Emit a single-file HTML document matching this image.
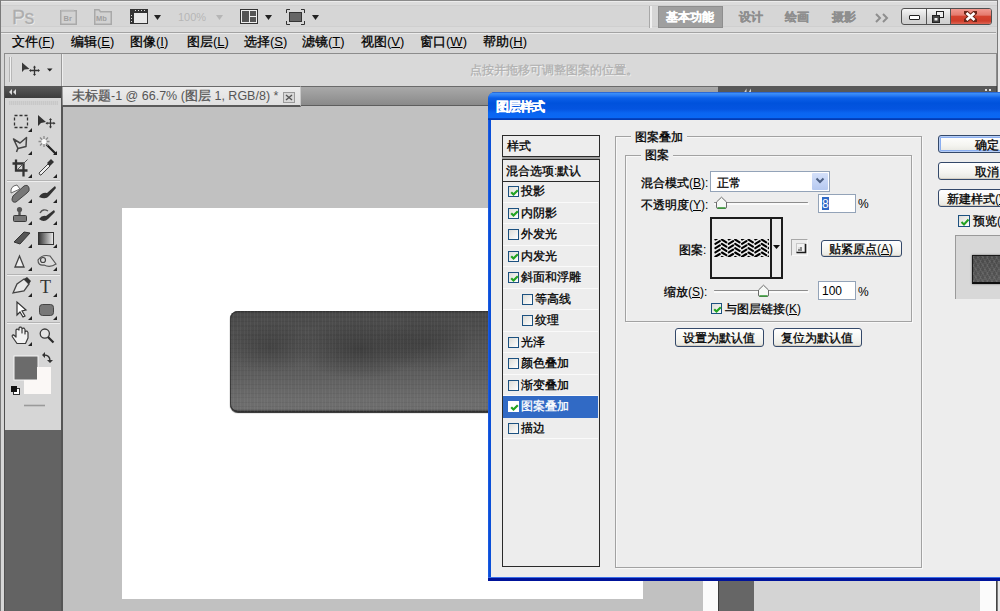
<!DOCTYPE html>
<html><head><meta charset="utf-8">
<style>
*{margin:0;padding:0;box-sizing:border-box}
html,body{width:1000px;height:611px;overflow:hidden}
body{position:relative;background:#d6d6d6;font-family:"Liberation Sans",sans-serif;font-size:12px;color:#000}
.a{position:absolute}
.t{position:absolute;white-space:nowrap;line-height:12px;font-size:12px}
u{text-decoration:underline}
.mn{font-size:13px}.mn .c{width:13px}
.tofu .c{transform:scale(1.4,1.05);-webkit-text-stroke:1px}
.c{display:inline-block;width:12px;text-align:center;-webkit-text-stroke:0.3px}
.cb{position:absolute;width:11px;height:11px;border:1px solid #1c5180;background:linear-gradient(135deg,#dcdcd7,#fff)}
.cbs{position:absolute;width:11px;height:11px;border:1px solid #fff;background:#fff}
.etch{border:1px solid #a2a2a2;box-shadow:inset 1px 1px 0 #f8f8f8,1px 1px 0 #f8f8f8}
.btn{border:1px solid #34496a;border-radius:3px;background:linear-gradient(#fff 0%,#f4f4f0 60%,#e6e6e0 100%);box-shadow:inset 0 -1px 0 #d6d0c5}
.def{box-shadow:inset 0 0 0 1px #b6cdf5,inset 0 0 0 2px #8aaef0}
</style></head><body>
<!-- app frame -->
<div class="a" style="left:0;top:0;width:1000px;height:1px;background:#8a8a8a"></div>
<div class="a" style="left:1px;top:1px;width:996px;height:1px;background:#ececec"></div>
<div class="a" style="left:0;top:0;width:1px;height:611px;background:#7a7a7a"></div>
<div class="a" style="left:997px;top:0;width:1px;height:611px;background:#7a7a7a"></div>
<div class="a" style="left:998px;top:0;width:2px;height:611px;background:#e8e8e8"></div>

<!-- title bar -->
<div class="a" style="left:1px;top:2px;width:996px;height:3px;background:#dcdcdc"></div>
<div class="a" style="left:1px;top:5px;width:996px;height:1px;background:#cfcfcf"></div>
<div class="a" style="left:1px;top:26px;width:996px;height:1px;background:#cfcfcf"></div>
<div class="a" style="left:1px;top:27px;width:996px;height:5px;background:#dadada"></div>
<div id="titlebar">
<div class="t" style="left:12px;top:7px;font-size:19.5px;line-height:20px;color:#acacac;-webkit-text-stroke:0.3px #b4b4b4;text-shadow:1px 1px 0 #ececec;letter-spacing:-0.5px">Ps</div>
<svg class="a" style="left:60px;top:9px" width="18" height="16"><rect x="0.75" y="1.75" width="15.5" height="13.5" fill="#d2d2d2" stroke="#a9a9a9" stroke-width="1.5"/><path d="M1 1.5H14" stroke="#b8b8b8" stroke-width="1.5"/><text x="3.5" y="12" font-family="Liberation Sans" font-size="7.5" font-weight="bold" fill="#a0a0a0">Br</text></svg>
<svg class="a" style="left:94px;top:9px" width="19" height="16"><path d="M0.75 15.25V0.75H5L6.5 2.75H17.25V15.25Z" fill="#d2d2d2" stroke="#a9a9a9" stroke-width="1.5"/><text x="2" y="12" font-family="Liberation Sans" font-size="7.5" font-weight="bold" fill="#a0a0a0">Mb</text></svg>
<svg class="a" style="left:130px;top:9px" width="19" height="16"><rect x="0.5" y="0.5" width="17" height="14" fill="#e8e8e8" stroke="#333"/><rect x="0" y="0" width="18" height="4" fill="#333"/><rect x="0" y="0" width="4" height="15" fill="#333"/><g fill="#ddd"><rect x="5" y="1" width="1" height="1"/><rect x="8" y="1" width="1" height="1"/><rect x="11" y="1" width="1" height="1"/><rect x="14" y="1" width="1" height="1"/><rect x="1" y="6" width="1" height="1"/><rect x="1" y="9" width="1" height="1"/><rect x="1" y="12" width="1" height="1"/></g></svg>
<svg class="a" style="left:154px;top:15px" width="7" height="5"><path d="M0 0H7L3.5 5Z" fill="#222"/></svg>
<div class="t" style="left:178px;top:12px;font-size:11px;line-height:11px;color:#b6b6b6">100%</div>
<svg class="a" style="left:216px;top:15px" width="7" height="5"><path d="M0 0H7L3.5 5Z" fill="#b6b6b6"/></svg>
<svg class="a" style="left:240px;top:9px" width="19" height="16"><rect x="0.5" y="0.5" width="17" height="14" fill="#eee" stroke="#333"/><rect x="2" y="2" width="7" height="11" fill="#555"/><rect x="10" y="2" width="6" height="5" fill="#555"/><rect x="10" y="8" width="6" height="5" fill="#555"/></svg>
<svg class="a" style="left:265px;top:15px" width="7" height="5"><path d="M0 0H7L3.5 5Z" fill="#222"/></svg>
<svg class="a" style="left:286px;top:9px" width="19" height="16"><path d="M0.5 4V0.5H4M15 0.5H18.5V4M18.5 12V15.5H15M4 15.5H0.5V12" fill="none" stroke="#333"/><rect x="3.5" y="3.5" width="12" height="9" fill="#666" stroke="#333"/></svg>
<svg class="a" style="left:312px;top:15px" width="7" height="5"><path d="M0 0H7L3.5 5Z" fill="#222"/></svg>
<div class="a" style="left:649px;top:6px;width:1px;height:22px;background:#a8a8a8"></div>
<div class="a" style="left:650px;top:6px;width:2px;height:22px;background:#f0f0f0"></div>
<div class="a" style="left:658px;top:6px;width:65px;height:22px;background:#9f9f9f;border:1px solid #8e8e8e"></div>
<div class="t" style="left:666px;top:11px;color:#fff;font-weight:bold"><span class=c>基</span><span class=c>本</span><span class=c>功</span><span class=c>能</span></div>
<div class="t" style="left:739px;top:11px;color:#8e8e8e;font-weight:bold"><span class=c>设</span><span class=c>计</span></div>
<div class="t" style="left:785px;top:11px;color:#8e8e8e;font-weight:bold"><span class=c>绘</span><span class=c>画</span></div>
<div class="t" style="left:832px;top:11px;color:#8e8e8e;font-weight:bold"><span class=c>摄</span><span class=c>影</span></div>
<svg class="a" style="left:875px;top:13px" width="15" height="10"><path d="M1 1L5 5L1 9M8 1L12 5L8 9" fill="none" stroke="#8e8e8e" stroke-width="2"/></svg>
<div class="a" style="left:901px;top:8px;width:91px;height:17px;border:1px solid #505050;border-radius:3px;background:linear-gradient(#f6f6f6,#d6d6d6 60%,#cfcfcf);overflow:hidden">
 <div class="a" style="left:24px;top:0;width:1px;height:15px;background:#555"></div>
 <div class="a" style="left:48px;top:0;width:41px;height:15px;background:linear-gradient(#f29a90 0%,#e57b6e 40%,#d4432f 50%,#cf3d2a 80%,#dd6655 100%);border-left:1px solid #555"></div>
 <div class="a" style="left:6.5px;top:6px;width:11px;height:5px;border:1px solid #222;background:#fff;border-radius:1px"></div>
 <svg class="a" style="left:29px;top:2px" width="15" height="12"><rect x="5.5" y="0.5" width="7" height="6" fill="#eee" stroke="#222"/><rect x="1.5" y="4.5" width="7" height="7" fill="#444" stroke="#222"/><rect x="3.5" y="7" width="3" height="2.5" fill="#eee"/></svg>
 <svg class="a" style="left:62px;top:2px" width="13" height="11"><path d="M2 1.5L11 9.5M11 1.5L2 9.5" stroke="#6a2518" stroke-width="4.6" stroke-linecap="round"/><path d="M2.5 2L10.5 9M10.5 2L2.5 9" stroke="#fff" stroke-width="2.6"/></svg>
</div>
</div>
<div class="a" style="left:1px;top:32px;width:995px;height:1px;background:#a3a3a3"></div>
<div class="a" style="left:1px;top:33px;width:995px;height:1px;background:#ececec"></div>

<!-- menu -->
<div id="menu">
<div class="t mn" style="left:12px;top:36px"><span class=c>文</span><span class=c>件</span>(<u>F</u>)</div>
<div class="t mn" style="left:71px;top:36px"><span class=c>编</span><span class=c>辑</span>(<u>E</u>)</div>
<div class="t mn" style="left:130px;top:36px"><span class=c>图</span><span class=c>像</span>(<u>I</u>)</div>
<div class="t mn" style="left:187px;top:36px"><span class=c>图</span><span class=c>层</span>(<u>L</u>)</div>
<div class="t mn" style="left:244px;top:36px"><span class=c>选</span><span class=c>择</span>(<u>S</u>)</div>
<div class="t mn" style="left:302px;top:36px"><span class=c>滤</span><span class=c>镜</span>(<u>T</u>)</div>
<div class="t mn" style="left:361px;top:36px"><span class=c>视</span><span class=c>图</span>(<u>V</u>)</div>
<div class="t mn" style="left:420px;top:36px"><span class=c>窗</span><span class=c>口</span>(<u>W</u>)</div>
<div class="t mn" style="left:483px;top:36px"><span class=c>帮</span><span class=c>助</span>(<u>H</u>)</div>
</div>

<!-- options bar -->
<div class="a" style="left:4px;top:53px;width:993px;height:33px;background:#d9d9d9;border:1px solid #8c8c8c;border-bottom:none"></div>

<!-- toolbox -->
<div class="a" style="left:4px;top:86px;width:59px;height:525px;background:#636363;border-left:1px solid #505050;border-right:2px solid #555"></div>
<div class="a" style="left:5px;top:86px;width:56px;height:12px;background:linear-gradient(#5a5a5a,#3c3c3c)"></div>
<div class="a" style="left:5px;top:98px;width:56px;height:332px;background:#d6d6d6"></div>
<svg class="a" style="left:0;top:0" width="62" height="430">
<g fill="#222">
<path d="M32 128V132H28ZM32 151V155H28ZM32 174V178H28ZM32 199V203H28ZM32 221V225H28ZM32 244V248H28ZM32 267V271H28ZM32 293V297H28ZM32 316V320H28ZM32 342V346H28Z"/>
<path d="M57 151V155H53ZM57 174V178H53ZM57 199V203H53ZM57 221V225H53ZM57 244V248H53ZM57 267V271H53ZM57 293V297H53ZM57 316V320H53Z"/>
</g>
<rect x="14.5" y="115.5" width="13" height="12" fill="none" stroke="#333" stroke-width="1.3" stroke-dasharray="3 2"/>
<path d="M38 115L38 126L41 123L46 122Z" fill="#333"/><path d="M50.5 119.5V127M47 123.2H54" stroke="#333" stroke-width="1.2"/><path d="M50.5 118L49 120H52ZM50.5 128.5L49 126.5H52ZM45.5 123.2L47.5 121.7V124.7ZM55.5 123.2L53.5 121.7V124.7Z" fill="#333"/>
<path d="M13.5 139L20 143L26.5 137.5L26 146.5L18 148.5Z" fill="none" stroke="#444" stroke-width="1.5" stroke-linejoin="round"/><path d="M18 148L16.5 152" stroke="#444" stroke-width="1.5"/>
<path d="M46.5 144.5L56 154" stroke="#222" stroke-width="2.2"/><path d="M44 136V147M38.5 141.5H49.5M40 137.5L48 145.5M48 137.5L40 145.5" stroke="#8a8a8a" stroke-width="1.3"/><circle cx="44" cy="141.5" r="2.6" fill="#fafafa"/>
<path d="M16 159.5V170.5H27.5M12.5 163.5H23.5V176.5" fill="none" stroke="#333" stroke-width="2.3"/><path d="M18 169L27.5 159.5" stroke="#555" stroke-width="1"/>
<path d="M40 175L39 173L48 164L50 166L41 175Z" fill="#eee" stroke="#444"/><path d="M47 163L51 159L54 162L50 166Z" fill="#333"/>
<path d="M13 196L24 186Q28 184 29 188Q30 191 27 193L16 202Q12 203 12 199Z" fill="#777" stroke="#444"/><path d="M11 193Q10 186 17 185L20 189Z" fill="#fff" stroke="#666"/>
<path d="M39 197Q42 192 47 193L55 186L56 188L49 196Q46 200 39 197Z" fill="#333"/>
<circle cx="19.5" cy="209.5" r="2.6" fill="#555"/><rect x="18.3" y="211" width="2.4" height="5" fill="#555"/><rect x="13.5" y="215.5" width="13" height="6" rx="1" fill="#777" stroke="#3a3a3a"/>
<path d="M39 219Q42 215 46 216L54 210L55 212L48 219Q44 223 39 219Z" fill="#333"/><path d="M40 213Q43 208 48 211" fill="none" stroke="#555" stroke-width="1.4"/>
<path d="M14 242L24 232L30 233L20 244Z" fill="#555" stroke="#333"/>
<rect x="38.5" y="232.5" width="15" height="12" fill="url(#gr)" stroke="#333"/>
<path d="M15 267L19.5 256L24 267Z" fill="#eee" stroke="#444" stroke-width="1.3"/>
<path d="M38 260Q42 254 50 256L56 264Q50 268 44 265Q38 266 38 260Z" fill="#ddd" stroke="#555" stroke-width="1.2"/><circle cx="43" cy="260" r="2.5" fill="none" stroke="#444" stroke-width="1.2"/>
<path d="M13 293L17 284L24 279L29 284L24 291Z" fill="#e8e8e8" stroke="#444" stroke-width="1.3"/><path d="M24 279L27 277L31 281L29 284Z" fill="#333"/>
<text x="40" y="293" font-family="Liberation Serif" font-size="18" fill="#333">T</text>
<path d="M17 302V315L20 312L23 317L25 316L22 311L26 310Z" fill="#fff" stroke="#333" stroke-width="1.2"/>
<rect x="39.5" y="304.5" width="14" height="11" rx="3" fill="#777" stroke="#444"/>
<path d="M17 343.5L12.5 337Q11.5 335 13.5 334.8L16 337V330Q16.5 328.8 17.8 329.2L19 330V328Q19.5 326.8 21 327.2L22 328.5V333V329Q22.5 327.8 24 328.2L25 329.5V334V332Q25.5 330.8 27 331.2L28 332.5V338L25.5 343.5Z" fill="#f2f2f2" stroke="#3a3a3a" stroke-width="1.2" stroke-linejoin="round"/>
<circle cx="44.8" cy="333.6" r="4.6" fill="#e4e4e4" stroke="#3a3a3a" stroke-width="1.3"/><path d="M48 337L53.5 342.5" stroke="#2a2a2a" stroke-width="2.2"/>
<path d="M7 180.5H60M7 274.5H60M7 322.5H60" stroke="#b4b4b4"/><path d="M7 181.5H60M7 275.5H60M7 323.5H60" stroke="#efefef"/>
<rect x="14" y="356" width="24" height="24" fill="#6b6b6b" stroke="#f6f6f6"/>
<rect x="37" y="367" width="14" height="27" fill="#fbf8f6"/><rect x="24" y="380" width="14" height="14" fill="#fbf8f6"/>
<rect x="13.5" y="388.5" width="6" height="6" fill="#fff" stroke="#333"/><rect x="11" y="386" width="6" height="6" fill="#111"/>
<path d="M44 355Q50 355 50 361" fill="none" stroke="#333" stroke-width="1.4"/><path d="M42 355L45 352V358ZM50 363L47 360H53Z" fill="#333"/>
<path d="M24 405.5H45" stroke="#9a9a9a" stroke-width="1.6"/>
<defs><linearGradient id="gr"><stop offset="0" stop-color="#333"/><stop offset="1" stop-color="#eee"/></linearGradient></defs>
</svg>


<!-- document area -->
<div class="a" style="left:62px;top:86px;width:656px;height:20px;background:linear-gradient(#a9a9a9,#8a8a8a);border-top:1px solid #6a6a6a;border-bottom:1px solid #5e5e5e"></div>
<div class="a" style="left:63px;top:106px;width:640px;height:505px;background:#c1c1c1"></div>
<div class="a" style="left:122px;top:208px;width:521px;height:391px;background:#fff"></div>

<!-- options content -->
<div class="a" style="left:9px;top:57px;width:1px;height:25px;background:#b4b4b4"></div><div class="a" style="left:10px;top:57px;width:1px;height:25px;background:#f2f2f2"></div><div class="a" style="left:11px;top:57px;width:1px;height:25px;background:#b8b8b8"></div>
<svg class="a" style="left:20px;top:60px" width="36" height="18"><path d="M2 2.5L2 12L4.5 9.5L9.5 9Z" fill="#3a3a3a"/><path d="M14.5 7V14.5M10.5 10.5H18.5" stroke="#333" stroke-width="1.3"/><path d="M14.5 5.5L13 7.5H16ZM14.5 16L13 14H16ZM9 10.5L11 9V12ZM20 10.5L18 9V12Z" fill="#333"/><path d="M27 8.5H32.5L29.75 11.5Z" fill="#222"/></svg>
<div class="a" style="left:61px;top:54px;width:1px;height:32px;background:#9a9a9a"></div>
<div class="a" style="left:62px;top:54px;width:1px;height:32px;background:#efefef"></div>
<div class="t" style="left:470px;top:64px;color:#b2b2b2;text-shadow:1px 1px 0 #f4f4f4;"><span class=c>点</span><span class=c>按</span><span class=c>并</span><span class=c>拖</span><span class=c>移</span><span class=c>可</span><span class=c>调</span><span class=c>整</span><span class=c>图</span><span class=c>案</span><span class=c>的</span><span class=c>位</span><span class=c>置</span><span class=c>。</span></div>
<!-- tab -->
<div class="a" style="left:63px;top:86px;width:238px;height:21px;background:linear-gradient(#ececec,#e0e0e0);border-top:1px solid #6a6a6a;border-right:1px solid #c8c8c8;border-bottom:2px solid #5a5a5a"></div>
<div class="t mn" style="left:72px;top:90px;color:#555;font-size:12.5px"><span class=c>未</span><span class=c>标</span><span class=c>题</span></div>
<div class="t mn" style="left:111px;top:90px;color:#555;font-size:12.5px">-1 @ 66.7% (</div>
<div class="t mn" style="left:185px;top:90px;color:#555;font-size:12.5px"><span class=c>图</span><span class=c>层</span></div>
<div class="t mn" style="left:211px;top:90px;color:#555;font-size:12.5px">&nbsp;1, RGB/8) *</div>
<div class="a" style="left:283px;top:92px;width:12px;height:11px;border:1px solid #9a9a9a;background:#d8d8d8"></div>
<svg class="a" style="left:285px;top:94px" width="8" height="7"><path d="M1 1L7 6M7 1L1 6" stroke="#555" stroke-width="1.4"/></svg>
<!-- dock header icons -->
<svg class="a" style="left:8px;top:88px" width="10" height="8"><path d="M4 1L1 4L4 7ZM8 1L5 4L8 7Z" fill="#ddd"/></svg>
<div class="a" style="left:9px;top:101px;width:49px;height:4px;background:repeating-linear-gradient(90deg,#c8c8c8 0 1px,#d0d0d0 1px 2px)"></div>
<!-- canvas button -->
<div class="a" style="left:230px;top:311px;width:300px;height:101px;border-radius:8px;background:linear-gradient(#3c3c3c 0px,#4a4a4a 3px,#525252 30%,#5e5e5e 62%,#6c6c6c 88%,#6e6e6e 97%,#3a3a3a 100%);box-shadow:0 1px 1px rgba(0,0,0,.85), inset 0 0 0 1px #333, inset 0 -1px 0 #222;overflow:hidden">
<div class="a" style="left:0;top:0;width:300px;height:101px;background:radial-gradient(ellipse 45px 26px at 40px 36px,rgba(30,30,30,.32),transparent),radial-gradient(ellipse 65px 30px at 130px 38px,rgba(30,30,30,.42),transparent),radial-gradient(ellipse 50px 28px at 195px 33px,rgba(30,30,30,.35),transparent)"></div>
<div class="a" style="left:0;top:0;width:300px;height:101px;background:repeating-linear-gradient(90deg,rgba(255,255,255,.04) 0 1px,transparent 1px 3.4px),repeating-linear-gradient(0deg,rgba(0,0,0,.05) 0 1px,transparent 1px 4.5px)"></div>
</div>
<!-- right dock -->
<div class="a" style="left:718px;top:86px;width:279px;height:525px;background:#d4d4d4"></div>
<div class="a" style="left:718px;top:86px;width:279px;height:7px;background:#585858"></div>
<div class="a" style="left:703px;top:92px;width:15px;height:519px;background:#fbfbfb"></div>
<div class="a" style="left:718px;top:92px;width:36px;height:519px;background:#666;border-left:1px solid #3a3a3a"></div>
<div class="a" style="left:980px;top:92px;width:16px;height:519px;background:#fbfbfb"></div>
<div class="a" style="left:996px;top:86px;width:1px;height:525px;background:#444"></div>

<svg class="a" style="left:744px;top:88px" width="8" height="5"><path d="M0 4.5L2.5 0.5V4.5ZM4.5 4.5L7 0.5V4.5Z" fill="#d0d0d0"/></svg>
<div class="a" style="left:985px;top:89px;width:2px;height:2px;background:#ddd"></div><div class="a" style="left:989px;top:89px;width:2px;height:2px;background:#ddd"></div>
<!-- dialog -->
<div id="dialog">
<div class="a" style="left:488px;top:92px;width:530px;height:489px;background:#0a4fd8;border-radius:7px 7px 0 0"></div>
<div class="a" style="left:488px;top:92px;width:530px;height:28px;border-radius:7px 7px 0 0;background:linear-gradient(#2358c8 0,#3b8ef8 1.5px,#2a7cf4 3.5px,#0b5fe8 6px,#0052dc 11px,#0454e0 17px,#0a66f2 21px,#0a68f4 25.5px,#0444c2 26.5px,#0038b0 28px)"></div>

<div class="t" style="left:496px;top:100px;font-size:13px;line-height:13px;font-weight:bold;color:#fff"><span class=c>图</span><span class=c>层</span><span class=c>样</span><span class=c>式</span></div>
<div class="a" style="left:491px;top:120px;width:520px;height:458px;background:#ededed"></div>
<div class="a" style="left:488px;top:120px;width:1px;height:461px;background:#1a5ae0"></div>
<div class="a" style="left:488px;top:578px;width:520px;height:3px;background:#00139a"></div>
<div class="a" style="left:488px;top:577px;width:520px;height:1px;background:#3a6ee8"></div>
<!-- style list -->
<div class="a" style="left:502px;top:135px;width:98px;height:432px;border:1.3px solid #2a2a2a;background:#ededed"></div>
<div class="t" style="left:507px;top:140px"><span class=c>样</span><span class=c>式</span></div>
<div class="a" style="left:502px;top:156px;width:98px;height:4px;background:#9a9a9a;border-top:1px solid #2a2a2a;border-bottom:1px solid #2a2a2a"></div>
<div class="t" style="left:506px;top:165px"><span class=c>混</span><span class=c>合</span><span class=c>选</span><span class=c>项</span>:<span class=c>默</span><span class=c>认</span></div>
<div class="a" style="left:502px;top:180.5px;width:98px;height:1.2px;background:#2a2a2a"></div>
<div class="a" style="left:503px;top:181.0px;width:95px;height:21.5px;background:transparent;border-bottom:1px solid #fafafa"></div>
<div class="a cb" style="left:508px;top:186.0px"><svg width="9" height="9" class="a" style="left:0.5px;top:0.5px"><path d="M1.2 4.2L3.5 6.5L7.8 2.2" fill="none" stroke="#22a322" stroke-width="2.2"/></svg></div>
<div class="t" style="left:521px;top:185.0px;color:#000"><span class=c>投</span><span class=c>影</span></div>
<div class="a" style="left:503px;top:202.5px;width:95px;height:21.5px;background:transparent;border-bottom:1px solid #fafafa"></div>
<div class="a cb" style="left:508px;top:207.5px"><svg width="9" height="9" class="a" style="left:0.5px;top:0.5px"><path d="M1.2 4.2L3.5 6.5L7.8 2.2" fill="none" stroke="#22a322" stroke-width="2.2"/></svg></div>
<div class="t" style="left:521px;top:206.5px;color:#000"><span class=c>内</span><span class=c>阴</span><span class=c>影</span></div>
<div class="a" style="left:503px;top:224.0px;width:95px;height:21.5px;background:transparent;border-bottom:1px solid #fafafa"></div>
<div class="a cb" style="left:508px;top:229.0px"></div>
<div class="t" style="left:521px;top:228.0px;color:#000"><span class=c>外</span><span class=c>发</span><span class=c>光</span></div>
<div class="a" style="left:503px;top:245.5px;width:95px;height:21.5px;background:transparent;border-bottom:1px solid #fafafa"></div>
<div class="a cb" style="left:508px;top:250.5px"><svg width="9" height="9" class="a" style="left:0.5px;top:0.5px"><path d="M1.2 4.2L3.5 6.5L7.8 2.2" fill="none" stroke="#22a322" stroke-width="2.2"/></svg></div>
<div class="t" style="left:521px;top:249.5px;color:#000"><span class=c>内</span><span class=c>发</span><span class=c>光</span></div>
<div class="a" style="left:503px;top:267.0px;width:95px;height:21.5px;background:transparent;border-bottom:1px solid #fafafa"></div>
<div class="a cb" style="left:508px;top:272.0px"><svg width="9" height="9" class="a" style="left:0.5px;top:0.5px"><path d="M1.2 4.2L3.5 6.5L7.8 2.2" fill="none" stroke="#22a322" stroke-width="2.2"/></svg></div>
<div class="t" style="left:521px;top:271.0px;color:#000"><span class=c>斜</span><span class=c>面</span><span class=c>和</span><span class=c>浮</span><span class=c>雕</span></div>
<div class="a" style="left:503px;top:288.5px;width:95px;height:21.5px;background:transparent;border-bottom:1px solid #fafafa"></div>
<div class="a cb" style="left:522px;top:293.5px"></div>
<div class="t" style="left:535px;top:292.5px;color:#000"><span class=c>等</span><span class=c>高</span><span class=c>线</span></div>
<div class="a" style="left:503px;top:310.0px;width:95px;height:21.5px;background:transparent;border-bottom:1px solid #fafafa"></div>
<div class="a cb" style="left:522px;top:315.0px"></div>
<div class="t" style="left:535px;top:314.0px;color:#000"><span class=c>纹</span><span class=c>理</span></div>
<div class="a" style="left:503px;top:331.5px;width:95px;height:21.5px;background:transparent;border-bottom:1px solid #fafafa"></div>
<div class="a cb" style="left:508px;top:336.5px"></div>
<div class="t" style="left:521px;top:335.5px;color:#000"><span class=c>光</span><span class=c>泽</span></div>
<div class="a" style="left:503px;top:353.0px;width:95px;height:21.5px;background:transparent;border-bottom:1px solid #fafafa"></div>
<div class="a cb" style="left:508px;top:358.0px"></div>
<div class="t" style="left:521px;top:357.0px;color:#000"><span class=c>颜</span><span class=c>色</span><span class=c>叠</span><span class=c>加</span></div>
<div class="a" style="left:503px;top:374.5px;width:95px;height:21.5px;background:transparent;border-bottom:1px solid #fafafa"></div>
<div class="a cb" style="left:508px;top:379.5px"></div>
<div class="t" style="left:521px;top:378.5px;color:#000"><span class=c>渐</span><span class=c>变</span><span class=c>叠</span><span class=c>加</span></div>
<div class="a" style="left:503px;top:396.0px;width:95px;height:21.5px;background:#316ac5;border-bottom:1px solid #316ac5"></div>
<div class="a cbs" style="left:508px;top:401.0px"><svg width="9" height="9" class="a" style="left:0.5px;top:0.5px"><path d="M1.2 4.2L3.5 6.5L7.8 2.2" fill="none" stroke="#22a322" stroke-width="2.2"/></svg></div>
<div class="t" style="left:521px;top:400.0px;color:#fff"><span class=c>图</span><span class=c>案</span><span class=c>叠</span><span class=c>加</span></div>
<div class="a" style="left:503px;top:417.5px;width:95px;height:21.5px;background:transparent;border-bottom:1px solid #fafafa"></div>
<div class="a cb" style="left:508px;top:422.5px"></div>
<div class="t" style="left:521px;top:421.5px;color:#000"><span class=c>描</span><span class=c>边</span></div>

<!-- pattern overlay panel -->
<div class="a etch" style="left:615px;top:136px;width:307px;height:432px"></div>
<div class="t" style="left:631px;top:131px;background:#ededed;padding:0 4px"><span class=c>图</span><span class=c>案</span><span class=c>叠</span><span class=c>加</span></div>
<div class="a etch" style="left:625px;top:155px;width:287px;height:167px"></div>
<div class="t" style="left:641px;top:149px;background:#ededed;padding:0 4px"><span class=c>图</span><span class=c>案</span></div>
<div class="t" style="left:641px;top:177px"><span class=c>混</span><span class=c>合</span><span class=c>模</span><span class=c>式</span>(<u>B</u>):</div>
<div class="a" style="left:710px;top:171px;width:120px;height:21px;border:1px solid #93a3b8;background:#fff"></div>
<div class="t" style="left:717px;top:177px"><span class=c>正</span><span class=c>常</span></div>
<div class="a" style="left:812px;top:173px;width:16px;height:17px;background:linear-gradient(#d4e0fa,#b6c9f0);border-radius:1px"></div>
<svg class="a" style="left:815px;top:177px" width="10" height="8"><path d="M1.5 1.5L5 5L8.5 1.5" fill="none" stroke="#4d6185" stroke-width="2"/></svg>
<div class="t" style="left:641px;top:199px"><span class=c>不</span><span class=c>透</span><span class=c>明</span><span class=c>度</span>(<u>Y</u>):</div>
<div class="a" style="left:714px;top:202px;width:94px;height:1px;background:#8c8c8c;border-radius:1px"></div><div class="a" style="left:714px;top:203px;width:95px;height:1.5px;background:#fafafa"></div>
<svg class="a" style="left:715px;top:196px" width="13" height="14"><path d="M1.5 6L6.5 1.2L11.5 6V11Q11.5 12.5 10 12.5H3Q1.5 12.5 1.5 11Z" fill="#f6f8f6" stroke="#6a6a6a"/><path d="M2.5 12H10.5" stroke="#3a9a3a" stroke-width="1.6"/></svg>
<div class="a" style="left:818px;top:194px;width:38px;height:19px;border:1px solid #93a3b8;background:#fff"></div>
<div class="a" style="left:822px;top:197px;width:7px;height:13px;background:#316ac5"></div>
<div class="t" style="left:822px;top:198px;color:#fff">8</div>
<div class="t" style="left:858px;top:198px">%</div>
<div class="t" style="left:679px;top:244px"><span class=c>图</span><span class=c>案</span>:</div>
<div class="a" style="left:710px;top:217px;width:73px;height:62px;border:2px solid #1c1c1c;background:#ececec"></div>
<div class="a" style="left:770px;top:217px;width:2px;height:62px;background:#1c1c1c"></div>
<svg class="a" style="left:713.5px;top:238.5px" width="55" height="18.5"><path d="M1.4 0.5L5.8 -2.2M7.9 -3.7L12.3 -1.0M1.4 4.8L5.8 2.1M7.9 0.6L12.3 3.3M1.4 9.1L5.8 6.4M7.9 4.9L12.3 7.6M1.4 13.4L5.8 10.7M7.9 9.2L12.3 11.9M1.4 17.7L5.8 15.0M7.9 13.5L12.3 16.2M1.4 22.0L5.8 19.3M7.9 17.8L12.3 20.5M1.4 26.3L5.8 23.6M7.9 22.1L12.3 24.8M14.7 0.5L19.1 -2.2M21.2 -3.7L25.6 -1.0M14.7 4.8L19.1 2.1M21.2 0.6L25.6 3.3M14.7 9.1L19.1 6.4M21.2 4.9L25.6 7.6M14.7 13.4L19.1 10.7M21.2 9.2L25.6 11.9M14.7 17.7L19.1 15.0M21.2 13.5L25.6 16.2M14.7 22.0L19.1 19.3M21.2 17.8L25.6 20.5M14.7 26.3L19.1 23.6M21.2 22.1L25.6 24.8M28.0 0.5L32.4 -2.2M34.5 -3.7L38.9 -1.0M28.0 4.8L32.4 2.1M34.5 0.6L38.9 3.3M28.0 9.1L32.4 6.4M34.5 4.9L38.9 7.6M28.0 13.4L32.4 10.7M34.5 9.2L38.9 11.9M28.0 17.7L32.4 15.0M34.5 13.5L38.9 16.2M28.0 22.0L32.4 19.3M34.5 17.8L38.9 20.5M28.0 26.3L32.4 23.6M34.5 22.1L38.9 24.8M41.3 0.5L45.7 -2.2M47.8 -3.7L52.2 -1.0M41.3 4.8L45.7 2.1M47.8 0.6L52.2 3.3M41.3 9.1L45.7 6.4M47.8 4.9L52.2 7.6M41.3 13.4L45.7 10.7M47.8 9.2L52.2 11.9M41.3 17.7L45.7 15.0M47.8 13.5L52.2 16.2M41.3 22.0L45.7 19.3M47.8 17.8L52.2 20.5M41.3 26.3L45.7 23.6M47.8 22.1L52.2 24.8M54.6 0.5L59.0 -2.2M61.1 -3.7L65.5 -1.0M54.6 4.8L59.0 2.1M61.1 0.6L65.5 3.3M54.6 9.1L59.0 6.4M61.1 4.9L65.5 7.6M54.6 13.4L59.0 10.7M61.1 9.2L65.5 11.9M54.6 17.7L59.0 15.0M61.1 13.5L65.5 16.2M54.6 22.0L59.0 19.3M61.1 17.8L65.5 20.5M54.6 26.3L59.0 23.6M61.1 22.1L65.5 24.8" fill="none" stroke="#000" stroke-width="2.1" stroke-linecap="round"/></svg>
<svg class="a" style="left:773px;top:245px" width="7" height="4"><path d="M0 0H7L3.5 4Z" fill="#111"/></svg>
<div class="a" style="left:791px;top:239px;width:17px;height:17px;border:1px solid #a8a8a8;border-right-color:#f8f8f8;border-bottom-color:#f8f8f8;background:#ececec"></div>
<svg class="a" style="left:796px;top:243px" width="11" height="11"><rect x="0.5" y="0.5" width="9" height="9" fill="#f2f2f2" stroke="#c8c8c8"/><path d="M0.5 9.5H9.5V1" stroke="#1a1a1a" stroke-width="1.6" fill="none"/><rect x="2" y="4" width="4" height="4" fill="#8a8a8a"/><rect x="2" y="4" width="2" height="2" fill="#ddd"/></svg>
<div class="a btn" style="left:821px;top:240px;width:81px;height:17px"></div>
<div class="t" style="left:829px;top:243px"><span class=c>贴</span><span class=c>紧</span><span class=c>原</span><span class=c>点</span>(<u>A</u>)</div>
<div class="t" style="left:664px;top:286px"><span class=c>缩</span><span class=c>放</span>(<u>S</u>):</div>
<div class="a" style="left:714px;top:290px;width:94px;height:1px;background:#8c8c8c;border-radius:1px"></div><div class="a" style="left:714px;top:291px;width:95px;height:1.5px;background:#fafafa"></div>
<svg class="a" style="left:757px;top:284px" width="13" height="14"><path d="M1.5 6L6.5 1.2L11.5 6V11Q11.5 12.5 10 12.5H3Q1.5 12.5 1.5 11Z" fill="#f6f8f6" stroke="#6a6a6a"/><path d="M2.5 12H10.5" stroke="#3a9a3a" stroke-width="1.6"/></svg>
<div class="a" style="left:818px;top:281px;width:38px;height:19px;border:1px solid #93a3b8;background:#fff"></div>
<div class="t" style="left:822px;top:285px">100</div>
<div class="t" style="left:858px;top:286px">%</div>
<div class="a cb" style="left:711px;top:303px"><svg width="9" height="9" class="a" style="left:0.5px;top:0.5px"><path d="M1.2 4.2L3.5 6.5L7.8 2.2" fill="none" stroke="#22a322" stroke-width="2.2"/></svg></div>
<div class="t" style="left:725px;top:303px"><span class=c>与</span><span class=c>图</span><span class=c>层</span><span class=c>链</span><span class=c>接</span>(<u>K</u>)</div>
<div class="a btn" style="left:675px;top:328px;width:89px;height:19px"></div>
<div class="t" style="left:683px;top:332px"><span class=c>设</span><span class=c>置</span><span class=c>为</span><span class=c>默</span><span class=c>认</span><span class=c>值</span></div>
<div class="a btn" style="left:773px;top:328px;width:89px;height:19px"></div>
<div class="t" style="left:781px;top:332px"><span class=c>复</span><span class=c>位</span><span class=c>为</span><span class=c>默</span><span class=c>认</span><span class=c>值</span></div>
<!-- right buttons -->
<div class="a btn def" style="left:938px;top:135px;width:80px;height:18px"></div>
<div class="t" style="left:975px;top:139px"><span class=c>确</span><span class=c>定</span></div>
<div class="a btn" style="left:938px;top:162px;width:80px;height:18px"></div>
<div class="t" style="left:975px;top:166px"><span class=c>取</span><span class=c>消</span></div>
<div class="a btn" style="left:938px;top:189px;width:80px;height:18px"></div>
<div class="t" style="left:947px;top:193px"><span class=c>新</span><span class=c>建</span><span class=c>样</span><span class=c>式</span>(<u>W</u>)...</div>
<div class="a cb" style="left:958px;top:215px;width:12px;height:12px"><svg width="10" height="10" class="a" style="left:1px;top:1px"><path d="M1.5 5L4 7.5L8.5 2.5" fill="none" stroke="#21a121" stroke-width="2"/></svg></div>
<div class="t" style="left:973px;top:215px"><span class=c>预</span><span class=c>览</span>(<u>V</u>)</div>
<div class="a" style="left:955px;top:235px;width:60px;height:64px;background:#d8d8d8;border-left:1px solid #9a9a9a;border-top:1px solid #9a9a9a"></div>
<div class="a" style="left:972px;top:255px;width:40px;height:29px;background:repeating-linear-gradient(60deg,rgba(255,255,255,.07) 0 1.5px,transparent 1.5px 4px),repeating-linear-gradient(-60deg,rgba(255,255,255,.06) 0 1.5px,transparent 1.5px 4px),linear-gradient(#4a4a4a,#555);border:1px solid #1a1a1a;border-bottom:2px solid #0e0e0e;box-shadow:0 0 2px rgba(0,0,0,.5)"></div>
</div>
<script>
(function(){var s=document.createElement('span');s.style.cssText='position:absolute;left:0;top:0;visibility:hidden;font-size:100px;line-height:100px;font-family:"Liberation Sans",sans-serif;white-space:nowrap';s.appendChild(document.createTextNode('\u56fd\u56fd'));document.body.appendChild(s);var w=s.getBoundingClientRect().width;document.body.removeChild(s);if(w<170){document.documentElement.className+=' tofu';}})();
</script>
</body></html>
